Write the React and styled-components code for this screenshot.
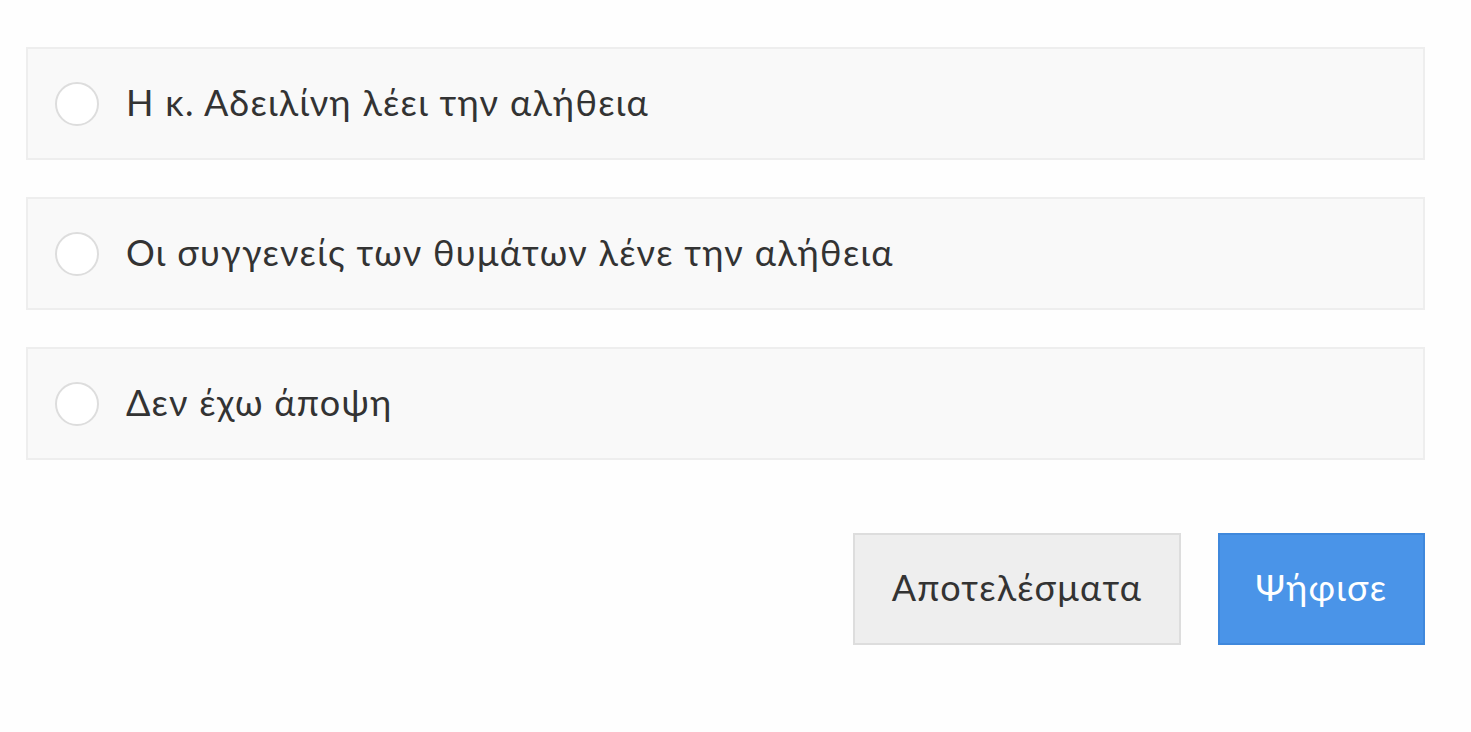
import React, { useState } from 'react';
import styled, { createGlobalStyle } from 'styled-components';

const GlobalStyle = createGlobalStyle`
    body {
        margin: 0;
        background: #fefefe;
        font-family: "Lato", "Noto Sans", sans-serif;
        color: #333;
    }
`;

const Poll = styled.form`
    display: flex;
    flex-direction: column;
    gap: 37px;
    width: 1399px;
    padding: 47px 0 0 26px;
`;

const Option = styled.label`
    display: flex;
    align-items: center;
    gap: 27px;
    height: 109px;
    padding: 0 27px;
    background: #f9f9f9;
    border: 2px solid #eeeeee;
    cursor: pointer;
`;

const Radio = styled.span`
    box-sizing: border-box;
    flex: none;
    width: 44px;
    height: 44px;
    border-radius: 50%;
    background: #fff;
    border: 2px solid ${(p) => (p.$checked ? '#4a94e8' : '#dddddd')};
    box-shadow: ${(p) => (p.$checked ? 'inset 0 0 0 9px #fff, inset 0 0 0 22px #4a94e8' : 'none')};
`;

const Text = styled.span`
    margin-bottom: 4px;
    font-size: 36px;
    letter-spacing: 1.3px;
    color: #333;
`;

const Actions = styled.div`
    display: flex;
    justify-content: flex-end;
    gap: 37px;
    margin-top: 36px;
`;

const Button = styled.button`
    height: 112px;
    width: ${(p) => p.$width}px;
    padding: 0 0 4px;
    font-family: inherit;
    font-size: 36px;
    letter-spacing: 1.3px;
    background: ${(p) => (p.$primary ? '#4a94e8' : '#eeeeee')};
    color: ${(p) => (p.$primary ? '#fff' : '#333')};
    border: 2px solid ${(p) => (p.$primary ? '#3f88dc' : '#dddddd')};
    cursor: pointer;
`;

const options = [
    'Η κ. Αδειλίνη λέει την αλήθεια',
    'Οι συγγενείς των θυμάτων λένε την αλήθεια',
    'Δεν έχω άποψη',
];

export default function App() {
    const [selected, setSelected] = useState(null);

    return (
        <>
            <GlobalStyle />
            <Poll onSubmit={(e) => e.preventDefault()}>
                {options.map((opt, i) => (
                    <Option key={i} onClick={() => setSelected(i)}>
                        <Radio $checked={selected === i} />
                        <Text>{opt}</Text>
                    </Option>
                ))}
                <Actions>
                    <Button type="button" $width={328}>Αποτελέσματα</Button>
                    <Button type="submit" $width={207} $primary>Ψήφισε</Button>
                </Actions>
            </Poll>
        </>
    );
}
